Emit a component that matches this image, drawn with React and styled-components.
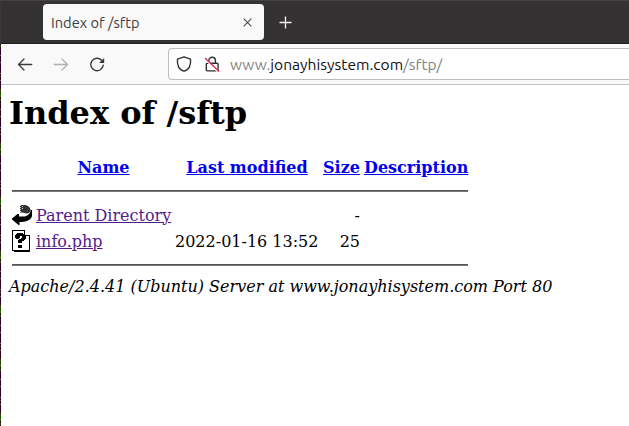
import React from "react";
import styled, { createGlobalStyle } from "styled-components";

const GlobalStyle = createGlobalStyle`
  * { box-sizing: border-box; }
  html, body { margin: 0; padding: 0; background: #fff; overflow: hidden; }
`;

const Screen = styled.div`
  display: grid;
  grid-template-columns: 1px 1fr;
  width: 629px;
  height: 426px;
  overflow: hidden;
`;

const DesktopEdge = styled.div`
  background:
    linear-gradient(#3a3839 0 44px, transparent 44px),
    repeating-linear-gradient(
      #2c001e 0 1px, #777078 1px 2px, #2c001e 2px 8px, #777078 8px 9px,
      #2c001e 9px 19px, #777078 19px 20px, #2c001e 20px 22px, #5e3a3a 22px 23px,
      #2c001e 23px 26px, #777078 26px 27px, #2c001e 27px 35px, #285005 35px 38px,
      #1f3a05 38px 40px, #2f6a02 40px 43px, #2c001e 43px 45px, #285005 45px 47px,
      #2c001e 47px 54px
    );
`;

const Window = styled.div`
  display: flex;
  flex-direction: column;
  min-width: 0;
  background: #fff;
`;

const TabBar = styled.div`
  display: flex;
  height: 44px;
  padding: 3px 0 3px 42px;
  background: #333132;
  border-top: 1px solid #454344;
  border-bottom: 1px solid #201e1f;
  box-shadow: -1px 0 0 #3a3839;
`;

const Tab = styled.div`
  display: flex;
  align-items: center;
  justify-content: space-between;
  width: 221px;
  height: 36px;
  padding: 0 12px 0 8px;
  border-radius: 4px;
  background: #f9f9fa;
`;

const TabTitle = styled.span`
  font: 14.667px/20px Ubuntu, "Noto Sans", sans-serif;
  padding-top: 1px;
  color: #3d3d3d;
  white-space: nowrap;
`;

const NewTab = styled.div`
  display: flex;
  align-items: center;
  margin-left: 15px;
  height: 36px;
`;

const Toolbar = styled.div`
  display: flex;
  align-items: center;
  height: 41px;
  padding-left: 16px;
  background: #f9f9fa;
  border-bottom: 1px solid #c3c3c3;
`;

const NavButtons = styled.div`
  display: flex;
  gap: 20px;
  width: 151px;
`;

const AddressBar = styled.div`
  display: flex;
  align-items: center;
  flex: 1;
  height: 32px;
  padding-left: 7px;
  border: 1px solid #bdbdbd;
  border-right: 0;
  border-radius: 4px 0 0 4px;
  background: #fff;
`;

const Icon = styled.svg`
  display: block;
  flex: none;
  margin-right: ${(p) => p.$gap || "0"};
`;

const Url = styled.span`
  font: 15.6px/22px Ubuntu, "Noto Sans", sans-serif;
  color: #838383;
  white-space: nowrap;
`;

const Domain = styled.span`
  color: #111;
`;

const Page = styled.main`
  flex: 1;
  padding: 8px 8px 0;
  font: 16px/19px "DejaVu Serif", serif;
  color: #000;
`;

const Title = styled.h1`
  margin: 0;
  height: 60px;
  font-size: 32px;
  line-height: 40px;
  font-weight: bold;
`;

const Listing = styled.table`
  border-collapse: separate;
  border-spacing: 2px;
  table-layout: fixed;
  width: 462px;
`;

const Column = styled.col`
  width: ${(p) => p.$width}px;
`;

const Cell = styled.td`
  padding: 1px;
  height: ${(p) => p.$height || 24}px;
  text-align: ${(p) => p.$align || "left"};
  vertical-align: middle;
  white-space: nowrap;
`;

const Head = styled(Cell).attrs({ as: "th" })`
  font-weight: bold;
  text-align: center;
`;

const Link = styled.a`
  color: ${(p) => (p.$visited ? "#551a8b" : "#0000ee")};
  text-decoration: underline;
`;

const Rule = styled.hr`
  height: 2px;
  margin: 8px 0;
  border: 0;
  border-top: 1px solid #555;
  border-bottom: 1px solid #777;
`;

const Footer = styled.address`
  font-style: italic;
  white-space: nowrap;
`;

const BackIcon = () => (
  <Icon width="16" height="16" viewBox="0 0 16 16" fill="none" stroke="#3b3b3d" strokeWidth="1.3" strokeLinecap="round" strokeLinejoin="round">
    <path d="M14.700 8.500H1.700M7 3 1.500 8.500 7 14" />
  </Icon>
);

const ForwardIcon = () => (
  <Icon width="16" height="16" viewBox="0 0 16 16" fill="none" stroke="#b0b0b1" strokeWidth="1.3" strokeLinecap="round" strokeLinejoin="round">
    <path d="M1.300 8.500h13M9 3l5.500 5.500L9 14" />
  </Icon>
);

const ReloadIcon = () => (
  <Icon width="16" height="16" viewBox="0 0 16 16" fill="none" stroke="#3b3b3d" strokeWidth="1.4" strokeLinecap="round">
    <path d="M12.600 4.300A6.200 6.200 0 1 0 14.200 9.100" />
    <path d="M15.200 1.900v5h-5.200z" fill="#3b3b3d" stroke="none" />
  </Icon>
);

const ShieldIcon = () => (
  <Icon $gap="12px" width="16" height="16" viewBox="0 0 16 16" fill="none" stroke="#303032" strokeWidth="1.35" strokeLinejoin="round">
    <path d="M8 .9 14.500 3.200c.3 2.500.1 5.500-1 7.700C12.300 13.100 10.300 14.700 8 15.200 5.700 14.700 3.700 13.100 2.500 10.900 1.400 8.700 1.200 5.700 1.500 3.200z" />
  </Icon>
);

const InsecureIcon = () => (
  <Icon $gap="10px" width="16" height="16" viewBox="0 0 16 16" fill="none">
    <path d="M4.800 7V4.500a3.300 3.300 0 0 1 6.600 0V7M3.300 7.200h9.800a1 1 0 0 1 1 1v5.700a1 1 0 0 1-1 1H3.300a1 1 0 0 1-1-1V8.200a1 1 0 0 1 1-1z" stroke="#303032" strokeWidth="1.4" />
    <path d="M.8 3 14.600 16.600" stroke="#fff" strokeWidth="1.400" />
    <path d="M1 2 15 15.500" stroke="#e22850" strokeWidth="1.300" />
  </Icon>
);

const ParentIcon = () => (
  <Icon width="20" height="22" viewBox="0 0 20 22">
    <path d="M8 1h4c4 0 6.500 2.500 6.800 5.500L17 9c-2.500 1-5 0-7-.5H8z" fill="#333" />
    <path d="M8.500 1v8M10.500 2v3" stroke="#ccc" strokeWidth="1" strokeDasharray="1 1" />
    <path d="M20 6v6c-.5 2-2 3.500-4 4.500-2.500 1-5.500 1.500-8.500 1.500V21H6.500L0 15.500v-1L5.500 10H7v2.500h4c3.500 0 6.500-1.500 8-6.500z" fill="#000" />
  </Icon>
);

const UnknownIcon = () => (
  <Icon width="20" height="22" viewBox="0 0 20 22" shapeRendering="crispEdges">
    <path d="M0 0h13v1h1v1h1v1h1v1h1v1h1v17H2v-1H0z" fill="#000" />
    <path d="M1 1h11v5h5v14H1z" fill="#fff" />
    <path d="M13 1v4h4V4h-1V3h-1V2h-1V1z" fill="#fff" />
    <path d="M12 1h1v4h5v1h-6z" fill="#000" />
    <path d="M5 3h6v1h2v2h1v3h-1v1h-1v1h-2v2H6v-3h1V9h2V8h1V6H8v2H7v1H4V8H3V5h1V4h1zM6 15h4v3H6z" fill="#000" />
  </Icon>
);

export default function App() {
  return (
    <>
      <GlobalStyle />
      <Screen>
        <DesktopEdge />
        <Window>
          <TabBar>
            <Tab>
              <TabTitle>Index of /sftp</TabTitle>
              <Icon width="9" height="9" viewBox="0 0 9 9" stroke="#4a4a4a" strokeWidth="1.1">
                <path d="m.7.7 7.600 7.600M8.300.7.7 8.300" />
              </Icon>
            </Tab>
            <NewTab>
              <Icon width="13" height="13" viewBox="0 0 13 13" stroke="#f4f4f4" strokeWidth="1.3">
                <path d="M.5 6.500h12M6.500.5v12" />
              </Icon>
            </NewTab>
          </TabBar>
          <Toolbar>
            <NavButtons>
              <BackIcon />
              <ForwardIcon />
              <ReloadIcon />
            </NavButtons>
            <AddressBar>
              <ShieldIcon />
              <InsecureIcon />
              <Url>www.<Domain>jonayhisystem.com</Domain>/sftp/</Url>
            </AddressBar>
          </Toolbar>
          <Page>
            <Title>Index of /sftp</Title>
            <Listing>
              <colgroup>
                <Column $width={22} />
                <Column $width={137} />
                <Column $width={146} />
                <Column $width={39} />
                <Column $width={106} />
              </colgroup>
              <tbody>
                <tr>
                  <Head />
                  <Head><Link>Name</Link></Head>
                  <Head><Link>Last modified</Link></Head>
                  <Head><Link>Size</Link></Head>
                  <Head><Link>Description</Link></Head>
                </tr>
                <tr>
                  <Cell colSpan={5} $height={20}><Rule /></Cell>
                </tr>
                <tr>
                  <Cell><ParentIcon /></Cell>
                  <Cell><Link $visited>Parent Directory</Link></Cell>
                  <Cell />
                  <Cell $align="right">-</Cell>
                  <Cell />
                </tr>
                <tr>
                  <Cell><UnknownIcon /></Cell>
                  <Cell><Link $visited>info.php</Link></Cell>
                  <Cell>2022-01-16 13:52</Cell>
                  <Cell $align="right">25</Cell>
                  <Cell />
                </tr>
                <tr>
                  <Cell colSpan={5} $height={20}><Rule /></Cell>
                </tr>
              </tbody>
            </Listing>
            <Footer>Apache/2.4.41 (Ubuntu) Server at www.jonayhisystem.com Port 80</Footer>
          </Page>
        </Window>
      </Screen>
    </>
  );
}
